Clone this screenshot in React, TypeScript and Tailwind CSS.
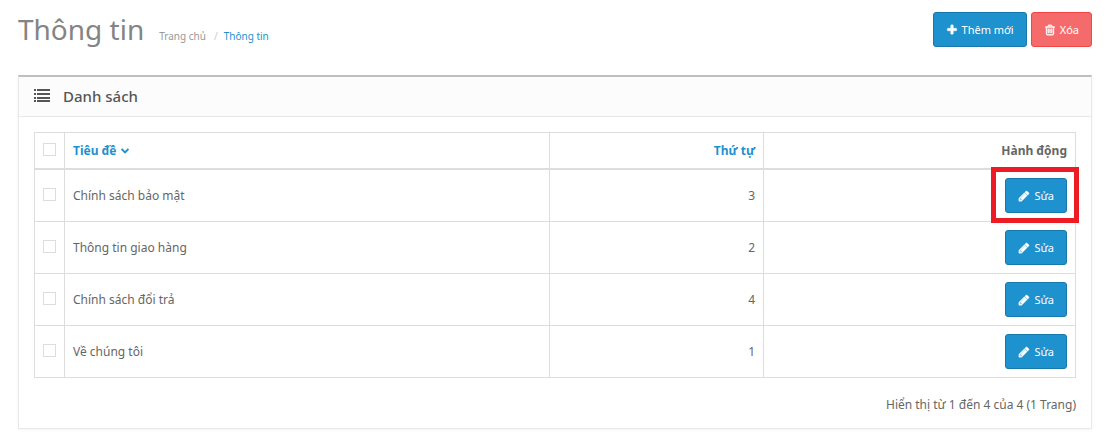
import type { ReactNode } from "react";

type InfoRow = {
  id: number;
  title: string;
  sortOrder: number;
  highlighted?: boolean;
};

const rows: InfoRow[] = [
  { id: 1, title: "Chính sách bảo mật", sortOrder: 3, highlighted: true },
  { id: 2, title: "Thông tin giao hàng", sortOrder: 2 },
  { id: 3, title: "Chính sách đổi trả", sortOrder: 4 },
  { id: 4, title: "Về chúng tôi", sortOrder: 1 },
];

const Icon = ({ children }: { children: ReactNode }) => (
  <svg
    viewBox="0 0 1792 1792"
    className="size-3 shrink-0 fill-current stroke-current stroke-[60]"
    aria-hidden="true"
  >
    {children}
  </svg>
);

const PlusIcon = () => (
  <Icon>
    <path d="M1600 736v192q0 40-28 68t-68 28h-416v416q0 40-28 68t-68 28h-192q-40 0-68-28t-28-68v-416h-416q-40 0-68-28t-28-68v-192q0-40 28-68t68-28h416v-416q0-40 28-68t68-28h192q40 0 68 28t28 68v416h416q40 0 68 28t28 68z" />
  </Icon>
);

const TrashIcon = () => (
  <Icon>
    <path d="M704 736v576q0 14-9 23t-23 9h-64q-14 0-23-9t-9-23v-576q0-14 9-23t23-9h64q14 0 23 9t9 23zm256 0v576q0 14-9 23t-23 9h-64q-14 0-23-9t-9-23v-576q0-14 9-23t23-9h64q14 0 23 9t9 23zm256 0v576q0 14-9 23t-23 9h-64q-14 0-23-9t-9-23v-576q0-14 9-23t23-9h64q14 0 23 9t9 23zm128 724v-948h-896v948q0 22 7 40.5t14.5 27 10.5 8.5h832q3 0 10.5-8.5t14.5-27 7-40.5zm-672-1076h448l-48-117q-7-9-17-11h-317q-10 2-17 11zm928 32v64q0 14-9 23t-23 9h-96v948q0 83-47 143.5t-113 60.5h-832q-66 0-113-58.5t-47-141.5v-952h-96q-14 0-23-9t-9-23v-64q0-14 9-23t23-9h309l70-167q15-37 54-63t79-26h320q40 0 79 26t54 63l70 167h309q14 0 23 9t9 23z" />
  </Icon>
);

const PencilIcon = () => (
  <Icon>
    <path d="M491 1536l91-91-235-235-91 91v107h128v128h107zm523-928q0-22-22-22-10 0-17 7l-542 542q-7 7-7 17 0 22 22 22 10 0 17-7l542-542q7-7 7-17zm-54-192l416 416-832 832h-416v-416zm683 96q0 53-37 90l-166 166-416-416 166-165q36-38 90-38 53 0 91 38l235 234q37 39 37 91z" />
  </Icon>
);

const ListIcon = () => (
  <svg
    viewBox="0 0 16 14"
    className="h-3.5 w-4 fill-[#555]"
    aria-hidden="true"
  >
    <path d="M0 0h2v2H0zM0 4h2v2H0zM0 8h2v2H0zM0 11h2v2H0zM3 0h13v2H3zM3 4h13v2H3zM3 8h13v2H3zM3 11h13v2H3z" />
  </svg>
);

const AngleDown = () => (
  <svg
    viewBox="0 0 8 6"
    className="mb-0.5 ml-1 inline-block h-1.5 w-2 fill-none stroke-current stroke-[1.8]"
    aria-hidden="true"
  >
    <path d="M.6 1L4 4.400 7.400 1" />
  </svg>
);

const Checkbox = ({ label }: { label: string }) => (
  <input
    type="checkbox"
    aria-label={label}
    className="mb-0.5 block size-[13px] appearance-none border border-[#ddd] bg-white checked:bg-[#1e91cf]"
  />
);

const buttonBase =
  "inline-flex h-[35px] items-center gap-1 rounded-[3px] border px-3 text-[11px] text-white";
const primary = "border-[#1978ab] bg-[#1e91cf]";
const danger = "border-[#f24545] bg-[#f56b6b]";
const headCell = "border-r border-b-2 border-[#ddd] px-2";
const cell = "border-r border-b border-[#ddd] px-2";

const App = () => {
  return (
    <div className="bg-white px-[18px] pt-3 pb-2 font-['Noto_Sans','Open_Sans',sans-serif] text-[12px] leading-[17px] text-[#666]">
      <header className="flex items-start justify-between">
        <div className="flex items-baseline gap-[15px]">
          <h1 className="text-[28px] leading-[34px] text-[#848484]">
            Thông tin
          </h1>
          <nav aria-label="Breadcrumb" className="text-[10px]">
            <ol className="flex">
              <li>
                <a href="#home" className="text-[#999]">
                  Trang chủ
                </a>
                <span className="pr-1.5 pl-2 text-[#ccc]">/</span>
              </li>
              <li>
                <a href="#information" className="text-[#1e91cf]">
                  Thông tin
                </a>
              </li>
            </ol>
          </nav>
        </div>
        <div className="flex gap-1">
          <button type="button" className={`${buttonBase} ${primary}`}>
            <PlusIcon />
            Thêm mới
          </button>
          <button type="button" className={`${buttonBase} ${danger}`}>
            <TrashIcon />
            Xóa
          </button>
        </div>
      </header>

      <section className="mt-7 border border-t-2 border-[#e8e8e8] border-t-[#bfbfbf] shadow-[0_1px_3px_rgba(0,0,0,0.05)]">
        <div className="flex h-10 items-center gap-[13px] border-b border-[#e8e8e8] bg-[#fcfcfc] px-[15px] pb-px">
          <ListIcon />
          <h2 className="text-[15px] leading-5 font-medium text-[#555]">
            Danh sách
          </h2>
        </div>

        <div className="p-[15px]">
          <table className="w-full table-fixed border-separate border-spacing-0 border-t border-l border-[#ddd]">
            <colgroup>
              <col className="w-[30px]" />
              <col />
              <col className="w-[214px]" />
              <col className="w-[312px]" />
            </colgroup>
            <thead>
              <tr className="h-[37px]">
                <th className={headCell}>
                  <Checkbox label="Chọn tất cả" />
                </th>
                <th className={`${headCell} text-left`}>
                  <a href="#sort-title" className="text-[#1e91cf]">
                    Tiêu đề
                    <AngleDown />
                  </a>
                </th>
                <th className={`${headCell} text-right`}>
                  <a href="#sort-order" className="text-[#1e91cf]">
                    Thứ tự
                  </a>
                </th>
                <th className={`${headCell} text-right`}>Hành động</th>
              </tr>
            </thead>
            <tbody>
              {rows.map((row) => (
                <tr key={row.id} className="h-[52px]">
                  <td className={cell}>
                    <Checkbox label={row.title} />
                  </td>
                  <td className={cell}>{row.title}</td>
                  <td className={`${cell} text-right`}>{row.sortOrder}</td>
                  <td className={`${cell} text-right`}>
                    <div className="relative inline-flex align-middle">
                      <button
                        type="button"
                        className={`${buttonBase} ${primary}`}
                      >
                        <PencilIcon />
                        Sửa
                      </button>
                      {row.highlighted && (
                        <span className="pointer-events-none absolute -top-[11px] -right-3 -bottom-2.5 -left-3.5 border-5 border-[#ed1c24]" />
                      )}
                    </div>
                  </td>
                </tr>
              ))}
            </tbody>
          </table>
          <p className="mt-[18px] text-right">
            Hiển thị từ 1 đến 4 của 4 (1 Trang)
          </p>
        </div>
      </section>
    </div>
  );
};

export default App;
